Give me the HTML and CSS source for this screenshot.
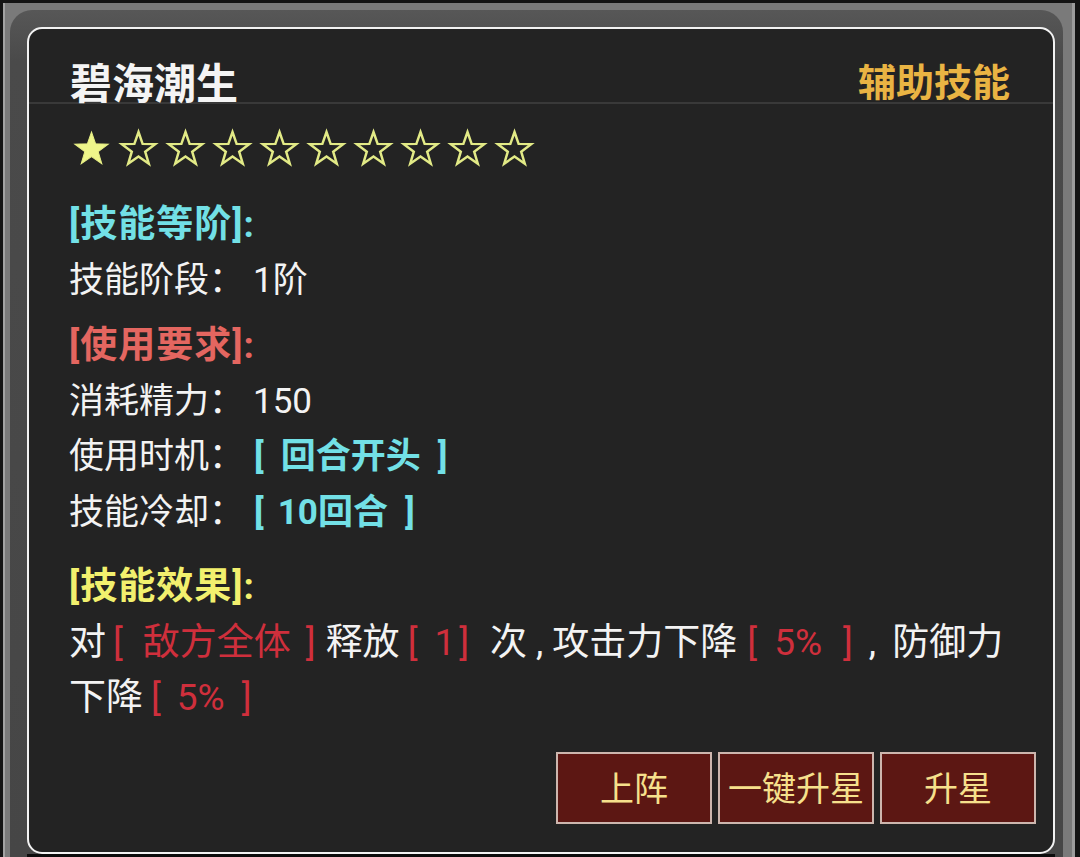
FILE: index.html
```html
<!DOCTYPE html>
<html lang="zh-CN">
<head>
<meta charset="utf-8">
<title>碧海潮生</title>
<link rel="stylesheet" href="styles.css">
</head>
<body>
<div class="screen">
  <div class="frame">
    <div class="frame-inner">
      <div class="panel">
        <div class="header">
          <div class="title">碧海潮生</div>
          <div class="tag">辅助技能</div>
        </div>
        <div class="stars">
          <svg class="star" viewBox="0 0 34 34"><polygon class="full" points="17,1 21,12.5 33.2,12.75 23.5,20.1 27,31.75 17,24.8 7,31.75 10.5,20.1 0.8,12.75 13,12.5"/></svg>
          <svg class="star" viewBox="0 0 34 34"><polygon class="empty" points="17,1 21,12.5 33.2,12.75 23.5,20.1 27,31.75 17,24.8 7,31.75 10.5,20.1 0.8,12.75 13,12.5"/></svg>
          <svg class="star" viewBox="0 0 34 34"><polygon class="empty" points="17,1 21,12.5 33.2,12.75 23.5,20.1 27,31.75 17,24.8 7,31.75 10.5,20.1 0.8,12.75 13,12.5"/></svg>
          <svg class="star" viewBox="0 0 34 34"><polygon class="empty" points="17,1 21,12.5 33.2,12.75 23.5,20.1 27,31.75 17,24.8 7,31.75 10.5,20.1 0.8,12.75 13,12.5"/></svg>
          <svg class="star" viewBox="0 0 34 34"><polygon class="empty" points="17,1 21,12.5 33.2,12.75 23.5,20.1 27,31.75 17,24.8 7,31.75 10.5,20.1 0.8,12.75 13,12.5"/></svg>
          <svg class="star" viewBox="0 0 34 34"><polygon class="empty" points="17,1 21,12.5 33.2,12.75 23.5,20.1 27,31.75 17,24.8 7,31.75 10.5,20.1 0.8,12.75 13,12.5"/></svg>
          <svg class="star" viewBox="0 0 34 34"><polygon class="empty" points="17,1 21,12.5 33.2,12.75 23.5,20.1 27,31.75 17,24.8 7,31.75 10.5,20.1 0.8,12.75 13,12.5"/></svg>
          <svg class="star" viewBox="0 0 34 34"><polygon class="empty" points="17,1 21,12.5 33.2,12.75 23.5,20.1 27,31.75 17,24.8 7,31.75 10.5,20.1 0.8,12.75 13,12.5"/></svg>
          <svg class="star" viewBox="0 0 34 34"><polygon class="empty" points="17,1 21,12.5 33.2,12.75 23.5,20.1 27,31.75 17,24.8 7,31.75 10.5,20.1 0.8,12.75 13,12.5"/></svg>
          <svg class="star" viewBox="0 0 34 34"><polygon class="empty" points="17,1 21,12.5 33.2,12.75 23.5,20.1 27,31.75 17,24.8 7,31.75 10.5,20.1 0.8,12.75 13,12.5"/></svg>
        </div>

        <div class="section sec-grade">
          <div class="sec-title cyan">[技能等阶]:</div>
          <div class="line">技能阶段：<span class="num">1阶</span></div>
        </div>

        <div class="section sec-req">
          <div class="sec-title salmon">[使用要求]:</div>
          <div class="line">消耗精力：<span class="num">150</span></div>
          <div class="line">使用时机：<span class="val-cyan v-time"><span class="ob">[</span>回合开头<span class="cb">]</span></span></div>
          <div class="line">技能冷却：<span class="val-cyan v-cd"><span class="ob">[</span>10回合<span class="cb">]</span></span></div>
        </div>

        <div class="section sec-effect">
          <div class="sec-title yellow">[技能效果]:</div>
          <div class="line desc">对<span class="val-red v-target"><span class="ob">[</span>敌方全体<span class="cb">]</span></span>释放<span class="val-red v-count"><span class="ob">[</span>1<span class="cb">]</span></span>次<span class="comma c-1">,</span>攻击力下降<span class="val-red v-atk"><span class="ob">[</span>5%<span class="cb">]</span></span><span class="comma c-2">,</span>防御力</div>
          <div class="line desc">下降<span class="val-red v-def"><span class="ob">[</span>5%<span class="cb">]</span></span></div>
        </div>

        <div class="buttons">
          <div class="btn">上阵</div>
          <div class="btn">一键升星</div>
          <div class="btn">升星</div>
        </div>
      </div>
      <div class="below"></div>
    </div>
  </div>
</div>
</body>
</html>
```

FILE: styles.css
```css
html, body {
  margin: 0;
  padding: 0;
  background: #141414;
  height: 857px;
  overflow: hidden;
}

body {
  font-family: Roboto, "Noto Sans CJK SC", sans-serif;
}

.screen {
  padding: 3px 5px 0 3px;
  height: 854px;
}

.frame {
  background: #7a7a7a;
  border-left: 2px solid #a2a2a2;
  border-right: 3px solid #9c9c9c;
  padding: 7px 9px 0 5px;
  height: 847px;
}

.frame-inner {
  background: linear-gradient(180deg, #575757 0%, #4a4a4a 6%, #464646 100%);
  border-radius: 22px 22px 0 0;
  padding: 17px 8px 0 17px;
  height: 830px;
}

.panel {
  background: #232323;
  border: 2px solid #f2f2f2;
  border-radius: 15px;
  padding: 0 0 28px 0;
  box-sizing: border-box;
}

.below {
  height: 20px;
  background: #0c0c0c;
}

.header {
  height: 73px;
  border-bottom: 2px solid #393939;
  display: flex;
  justify-content: space-between;
  align-items: flex-end;
  padding: 0 43px 0 41px;
}

.title {
  color: #f4f4f4;
  font-size: 42px;
  font-weight: 700;
  line-height: 42px;
  margin-bottom: -3.5px;
}

.tag {
  color: #e9b443;
  font-size: 38px;
  font-weight: 700;
  line-height: 38px;
  margin-bottom: 0;
}

.stars {
  display: flex;
  gap: 12px;
  margin: 27px 0 0 45px;
  height: 35px;
}

.star {
  width: 35px;
  height: 35px;
  display: block;
  overflow: visible;
}

.star .full {
  fill: #eef68a;
  stroke: #e6ee84;
  stroke-width: 1;
}

.star .empty {
  fill: none;
  stroke: #e2ea86;
  stroke-width: 2.4;
  stroke-linejoin: miter;
}

.section {
  padding-left: 40px;
  font-size: 35px;
  line-height: 55.5px;
  color: #f3f3f3;
}

.sec-grade { margin-top: 31px; }
.sec-req { margin-top: 10px; }
.sec-effect { margin-top: 19px; }

.sec-title {
  font-weight: 700;
  font-size: 37px;
  letter-spacing: 1px;
}

.cyan { color: #72e0e6; }
.salmon { color: #e46660; }
.yellow { color: #f2f06e; }

.num {
  margin-left: 9px;
}

.val-cyan {
  color: #72e0e6;
  font-weight: 700;
}

.v-time .ob { margin: 0 17px 0 10px; }
.v-time .cb { margin-left: 17px; }
.v-cd .ob { margin: 0 14px 0 10px; }
.v-cd .cb { margin-left: 17px; }

.desc {
  font-size: 37px;
}

.val-red {
  color: #cf2f3c;
}

.v-target .ob { margin: 0 20px 0 7px; }
.v-target .cb { margin: 0 10px 0 15px; }
.v-count .ob { margin: 0 17px 0 8px; }
.v-count .cb { margin: 0 21px 0 4px; }
.v-atk .ob { margin: 0 17px 0 10px; }
.v-atk .cb { margin: 0 0 0 21px; }
.v-def .ob { margin: 0 16px 0 8px; }
.v-def .cb { margin: 0 0 0 17px; }

.c-1 { margin: 0 9px 0 9px; }
.c-2 { margin: 0 16px 0 16px; }

.line {
  white-space: nowrap;
}

.buttons {
  display: flex;
  justify-content: flex-end;
  gap: 6px;
  margin-top: 26px;
  padding-right: 17px;
}

.btn {
  width: 156px;
  height: 72px;
  box-sizing: border-box;
  background: #5c1713;
  border: 2px solid #cdb6ae;
  color: #f6e08c;
  font-family: "Noto Sans CJK SC", sans-serif;
  font-size: 34px;
  line-height: 66px;
  text-align: center;
  white-space: nowrap;
}
```
